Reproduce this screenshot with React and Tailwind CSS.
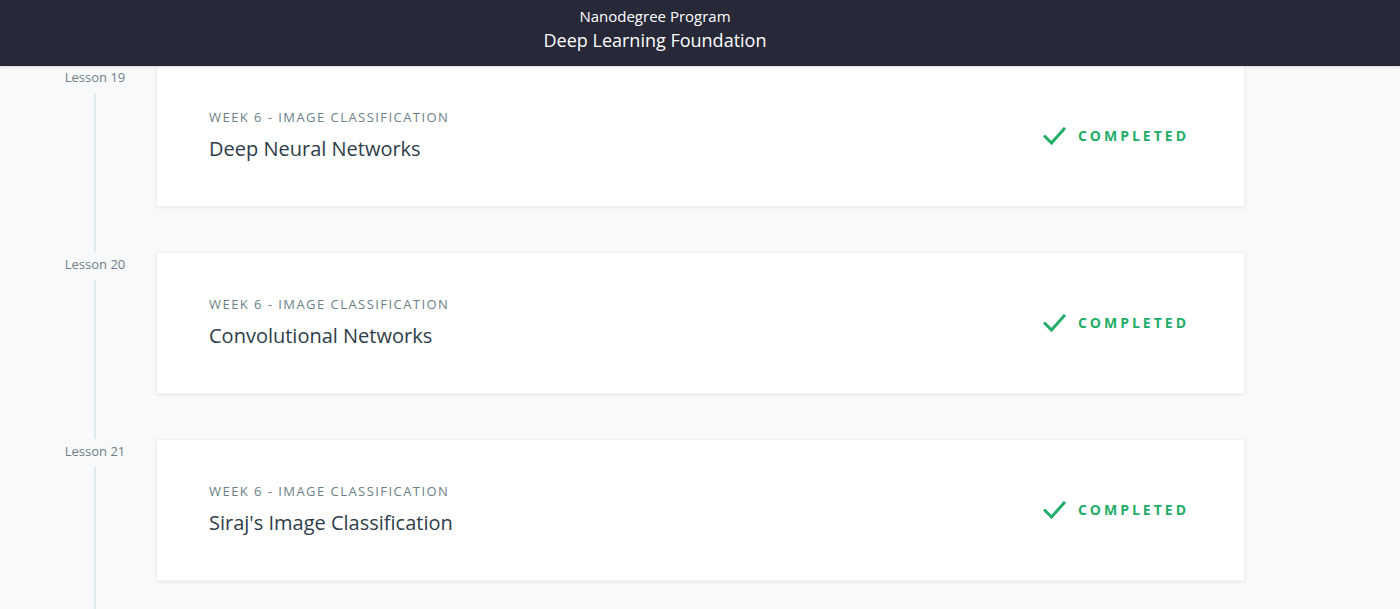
import React from 'react';

const LESSONS = [
  { n: 19, title: 'Deep Neural Networks' },
  { n: 20, title: 'Convolutional Networks' },
  { n: 21, title: "Siraj's Image Classification" },
];

function Check() {
  return (
    <svg width="23" height="18" viewBox="0 0 23 18" fill="none">
      <path d="M2 9.5 L8.5 16 L21 2" stroke="#22ad68" strokeWidth="3" strokeLinecap="square" />
    </svg>
  );
}

export default function App() {
  return (
    <div className="h-[609px] overflow-hidden bg-[#f7f9fa] flex flex-col" style={{ fontFamily: '"Open Sans", sans-serif' }}>
      {/* Header */}
      <div className="h-[66px] shrink-0 bg-[#272838] flex flex-col items-center pt-[6px] pr-[90px] text-white shadow-sm z-10">
        <div className="text-[15px] leading-5">Nanodegree Program</div>
        <div className="text-[18px] leading-6 mt-[2px]">Deep Learning Foundation</div>
      </div>

      {/* Lessons */}
      <div className="flex flex-col -mt-[1px]">
        {LESSONS.map(l => (
          <div key={l.n} className="flex">
            <div className="w-[156px] shrink-0 pl-[64px] flex">
              <div className="w-[62px] flex flex-col items-center">
                <div className="pt-[4px] mb-[4px] text-[13px] leading-4 text-[#6d7f88] whitespace-nowrap">Lesson {l.n}</div>
                <div className="w-[2px] flex-1 bg-[#dfeaee] mt-[4px]" />
              </div>
            </div>
            <div className="pb-[45px]">
              <div className="w-[1089px] h-[142px] bg-white border border-[#edf2f4] shadow-[0_1px_3px_rgba(46,61,73,0.08)] flex items-center pl-[52px] pr-[55px]">
                <div className="flex-1 flex flex-col mt-[-2px]">
                  <div className="text-[13px] leading-[18px] tracking-[1.45px] text-[#6a7f87] uppercase">Week 6 - Image Classification</div>
                  <div className="text-[20px] leading-7 text-[#2e3d49] mt-[9px]">{l.title}</div>
                </div>
                <div className="flex items-center gap-[12px] -mt-[1px]">
                  <Check />
                  <span className="text-[14px] font-bold tracking-[3px] text-[#22ad68]">COMPLETED</span>
                </div>
              </div>
            </div>
          </div>
        ))}
      </div>
    </div>
  );
}
